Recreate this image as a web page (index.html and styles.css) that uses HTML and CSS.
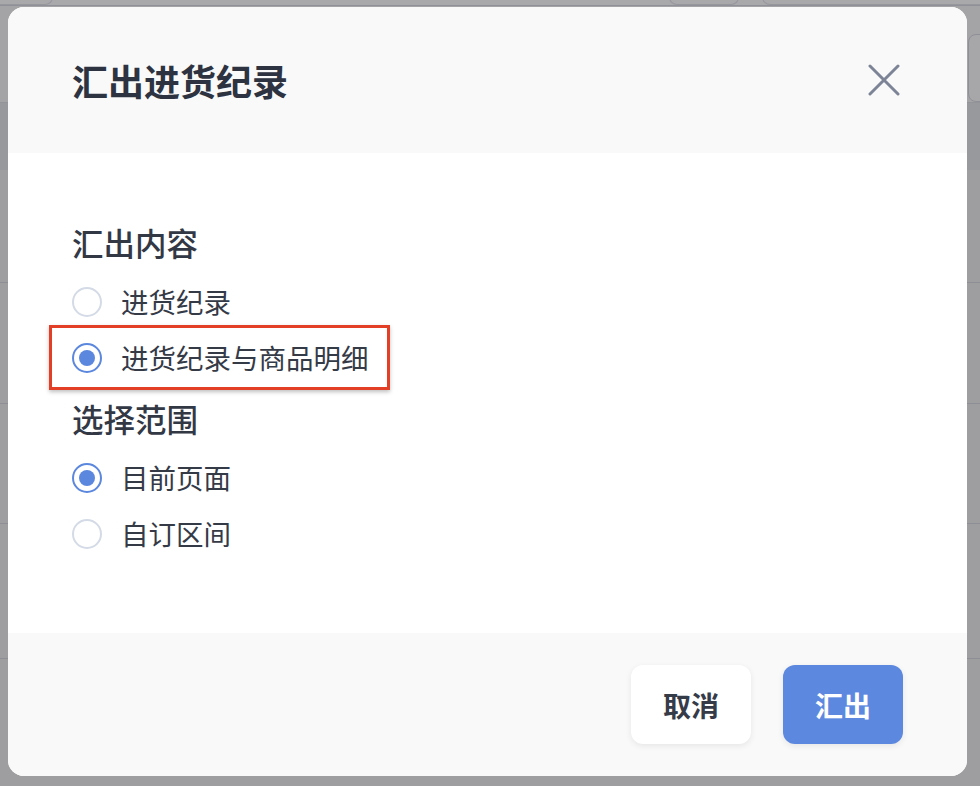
FILE: index.html
```html
<!DOCTYPE html>
<html lang="zh-CN">
<head>
<meta charset="utf-8">
<title>汇出进货纪录</title>
<link rel="stylesheet" href="styles.css">
</head>
<body>
<div class="backdrop">
  <div class="bg-top">
    <span class="bg-tab bg-tab-a"></span>
    <span class="bg-tab bg-tab-b"></span>
    <span class="bg-tab bg-tab-c"></span>
  </div>
  <div class="bg-head">
    <span class="bg-input"></span>
  </div>
  <div class="bg-band"></div>
  <div class="bg-row bg-row-1"></div>
  <div class="bg-row bg-row-2"></div>
  <div class="bg-row bg-row-3"></div>
  <div class="bg-row bg-row-4"></div>
  <div class="bg-row bg-row-5"></div>
</div>

<div class="modal">
  <header class="modal-header">
    <h1 class="modal-title">汇出进货纪录</h1>
    <button class="close-btn" aria-label="关闭">
      <svg width="32" height="32" viewBox="0 0 32 32">
        <path d="M2 2 L30 30 M30 2 L2 30" stroke="currentColor" stroke-width="3" stroke-linecap="round" fill="none"/>
      </svg>
    </button>
  </header>

  <div class="modal-body">
    <section class="group">
      <div class="group-label">汇出内容</div>
      <label class="radio-row">
        <span class="radio"></span>
        <span class="radio-text">进货纪录</span>
      </label>
      <label class="radio-row">
        <span class="radio checked"></span>
        <span class="radio-text">进货纪录与商品明细</span>
        <span class="highlight"></span>
      </label>
    </section>
    <section class="group">
      <div class="group-label">选择范围</div>
      <label class="radio-row">
        <span class="radio checked"></span>
        <span class="radio-text">目前页面</span>
      </label>
      <label class="radio-row">
        <span class="radio"></span>
        <span class="radio-text">自订区间</span>
      </label>
    </section>
  </div>

  <footer class="modal-footer">
    <button class="btn btn-cancel">取消</button>
    <button class="btn btn-primary">汇出</button>
  </footer>
</div>
</body>
</html>
```

FILE: styles.css
```css
* {
  box-sizing: border-box;
}

html, body {
  margin: 0;
  padding: 0;
}

body {
  width: 980px;
  height: 786px;
  overflow: hidden;
  position: relative;
  background: #9d9da0;
  font-family: "Noto Sans CJK SC", "Noto Sans", sans-serif;
  color: #343946;
}

/* ---------- backdrop (dimmed page behind the dialog) ---------- */
.backdrop {
  display: flex;
  flex-direction: column;
  width: 980px;
  height: 786px;
}

.bg-top {
  position: relative;
  height: 6px;
  background: #a9a9ab;
  border-bottom: 1px solid #8f9098;
}

.bg-tab {
  position: absolute;
  top: -4px;
  height: 9px;
  border: 1px solid #96979d;
  border-top: none;
  border-radius: 0 0 8px 8px;
}

.bg-tab-a { left: -10px; width: 63px; }
.bg-tab-b { left: 669px; width: 70px; border-left: 1px solid #96979d; }
.bg-tab-c { left: 762px; width: 240px; }

.bg-head {
  height: 97px;
  background: #a4a4a6;
  border-bottom: 1px solid #93949a;
  display: flex;
  justify-content: flex-end;
  padding-top: 28px;
}

.bg-input {
  width: 30px;
  height: 68px;
  margin-right: -18px;
  border: 1px solid #8f9097;
  border-radius: 8px;
  background: #a7a7a9;
}

.bg-band {
  height: 67px;
  background: #98999d;
}

.bg-row {
  border-top: 1px solid #8e8f95;
  background: #9e9ea1;
}

.bg-row-1 { height: 112px; border-top: none; }
.bg-row-2 { height: 121px; }
.bg-row-3 { height: 120px; }
.bg-row-4 { height: 135px; }
.bg-row-5 { flex: 1; }

/* ---------- dialog ---------- */
.modal {
  position: absolute;
  left: 8px;
  top: 7px;
  width: 959px;
  border-radius: 16px;
  overflow: hidden;
  background: #ffffff;
}

.modal-header {
  height: 146px;
  background: #f9f9f9;
  display: flex;
  align-items: center;
  justify-content: space-between;
  padding: 0 67px 0 64px;
}

.modal-title {
  margin: 0;
  font-size: 36px;
  line-height: 1;
  font-weight: 700;
  color: #2e3341;
}

.close-btn {
  width: 32px;
  height: 32px;
  padding: 0;
  border: none;
  background: none;
  color: #7d8496;
  display: block;
}

.close-btn svg {
  display: block;
}

.modal-body {
  display: flex;
  flex-direction: column;
  gap: 8px;
  padding: 65px 64px 71px;
}

.group {
  display: flex;
  flex-direction: column;
}

.group-label {
  height: 48px;
  line-height: 48px;
  font-size: 31.5px;
  font-weight: 500;
  color: #333845;
  margin-bottom: 8px;
}

.radio-row {
  position: relative;
  height: 56px;
  display: flex;
  align-items: center;
  gap: 19px;
}

.radio {
  width: 30px;
  height: 30px;
  border-radius: 50%;
  border: 2px solid #d4dbe6;
  background: #ffffff;
  display: flex;
  align-items: center;
  justify-content: center;
  flex: none;
}

.radio.checked {
  border-color: #5b87de;
}

.radio.checked::after {
  content: "";
  width: 16px;
  height: 16px;
  border-radius: 50%;
  background: #5b87de;
}

.radio-text {
  font-size: 27.5px;
  line-height: 1;
  color: #353a47;
}

.highlight {
  position: absolute;
  left: -23px;
  top: -5px;
  width: 341px;
  height: 65px;
  border: 3px solid #e33f27;
  box-shadow: 0 2px 4px rgba(0, 0, 0, 0.25);
  pointer-events: none;
}

.modal-footer {
  height: 143px;
  background: #f9f9f9;
  display: flex;
  align-items: center;
  justify-content: flex-end;
  gap: 32px;
  padding: 0 64px;
}

.btn {
  width: 120px;
  height: 79px;
  border: none;
  border-radius: 12px;
  font-family: "Noto Sans CJK SC", "Noto Sans", sans-serif;
  font-size: 28px;
  font-weight: 700;
  box-shadow: 0 2px 6px rgba(0, 0, 0, 0.08);
}

.btn-cancel {
  background: #ffffff;
  color: #363b48;
}

.btn-primary {
  background: #5d88df;
  color: #ffffff;
}
```
